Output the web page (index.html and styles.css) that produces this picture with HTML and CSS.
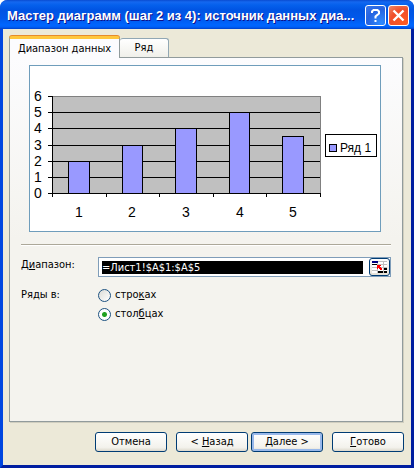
FILE: index.html
```html
<!DOCTYPE html>
<html lang="ru">
<head>
  <meta charset="UTF-8" />
  <meta name="viewport" content="width=device-width, initial-scale=1.0"/>
  <title>Мастер диаграмм</title>
  <link rel="stylesheet" href="styles.css">
</head>
<body>
  <form class="dialog">
    <header class="titlebar">
      <h1>Мастер диаграмм (шаг 2 из 4): источник данных диа...</h1>
      <button type="button" class="caption-btn" aria-label="Справка">
        <svg width="21" height="21" viewBox="0 0 21 21">
          <path d="M7 8V6.500L8.500 5H12.500L14 6.500V8.500L10.500 11.500V13.500M10.500 15V17" fill="none" stroke="#fff" stroke-width="2"/>
        </svg>
      </button>
      <button type="button" class="caption-btn close" aria-label="Закрыть">
        <svg width="21" height="21" viewBox="0 0 21 21">
          <path d="M5.500 5.500L15.500 15.500M15.500 5.500L5.500 15.500" fill="none" stroke="#fff" stroke-width="2.400"/>
        </svg>
      </button>
    </header>

    <main class="content">
      <div class="tabs" role="tablist">
        <button type="button" class="tab active" role="tab" aria-selected="true">Диапазон данных</button>
        <button type="button" class="tab" role="tab" aria-selected="false">Ряд</button>
      </div>

      <section class="panel">
        <svg class="chart" viewBox="0 0 352 167">
          <rect class="chart-frame" x="0.500" y="0.500" width="351" height="166"/>
          <rect class="plot" x="23.500" y="31.500" width="268" height="97"/>
          <path class="line" d="M23 47.500H291M23 63.500H291M23 80.500H291M23 96.500H291M23 112.500H291"/>
          <g class="bar">
            <rect x="39.500" y="96.500" width="21" height="32"/>
            <rect x="93.500" y="80.500" width="20" height="48"/>
            <rect x="146.500" y="63.500" width="21" height="65"/>
            <rect x="200.500" y="47.500" width="20" height="81"/>
            <rect x="253.500" y="71.500" width="21" height="57"/>
          </g>
          <path class="line" d="M23.500 31V132M19 128.500H292M19 31.500H23M19 47.500H23M19 63.500H23M19 80.500H23M19 96.500H23M19 112.500H23M77.500 129V132M130.500 129V132M184.500 129V132M237.500 129V132M291.500 129V132"/>
          <g class="axis" text-anchor="middle">
            <text x="9" y="36">6</text>
            <text x="9" y="52">5</text>
            <text x="9" y="68">4</text>
            <text x="9" y="85">3</text>
            <text x="9" y="101">2</text>
            <text x="9" y="117">1</text>
            <text x="9" y="133">0</text>
            <text x="50" y="152">1</text>
            <text x="103" y="152">2</text>
            <text x="157" y="152">3</text>
            <text x="211" y="152">4</text>
            <text x="264" y="152">5</text>
          </g>
          <rect class="legend" x="296.500" y="69.500" width="51" height="22"/>
          <rect class="bar" x="300.500" y="79.500" width="7" height="7"/>
          <text class="legend-text" x="311" y="87">Ряд 1</text>
        </svg>

        <hr class="divider">

        <div class="row">
          <label class="caption" for="range">Д<u>и</u>апазон:</label>
          <div class="range-box">
            <input id="range" class="range" type="text" value="=Лист1!$A$1:$A$5">
            <button type="button" class="picker" aria-label="Свернуть диалог">
              <svg width="15" height="12" viewBox="0 0 15 12" shape-rendering="crispEdges">
                <rect width="15" height="12" fill="#fff"/>
                <path d="M0 6.500H15M0 9.500H6M6 .5H15M6 3.500H15M5.500 0V12M11.500 0V12" stroke="#c0c0c0" fill="none"/>
                <rect width="6" height="2" fill="#000080"/>
                <path d="M0 3H5V4H0zM12 7H15V9H12zM6 10H11V12H6zM12 10H15V12H12z" fill="#000"/>
                <path d="M5 4H9V5H8V6H9V7H10V9H8V8H7V7H6V8H5z" fill="#f00"/>
              </svg>
            </button>
          </div>
        </div>

        <div class="row series">
          <span class="caption" id="series-label">Ряды в:</span>
          <div class="options" role="radiogroup" aria-labelledby="series-label">
            <label class="option"><input type="radio" name="series"><span>стро<u>к</u>ах</span></label>
            <label class="option"><input type="radio" name="series" checked><span>стол<u>б</u>цах</span></label>
          </div>
        </div>
      </section>
    </main>

    <footer class="actions">
      <button type="button" class="btn">Отмена</button>
      <div class="nav">
        <button type="button" class="btn">&lt; <u>Н</u>азад</button>
        <button type="button" class="btn default"><u>Д</u>алее &gt;</button>
      </div>
      <button type="button" class="btn"><u>Г</u>отово</button>
    </footer>
  </form>
</body>
</html>
```

FILE: styles.css
```css
:root {
  --face: #ece9d8;
  --field-border: #7f9db9;
  --btn-border: #003c74;
  --series: #9999ff;
}
* {
  box-sizing: border-box;
}
body {
  margin: 0;
  background: #fff;
  color: #000;
  font-family: "DejaVu Sans Condensed", Tahoma, sans-serif;
  font-size: 11px;
  line-height: 14px;
}
button, input {
  font: inherit;
  color: inherit;
  margin: 0;
}
u {
  text-underline-offset: 1px;
}
.dialog {
  display: flex;
  flex-direction: column;
  min-height: 100vh;
  background: var(--face);
  border: solid #0831d9;
  border-color: #0054e3 #001ea0 #001ea0 #0046e0;
  border-width: 0 3px 3px 3px;
  border-radius: 8px 8px 0 0;
}
.titlebar {
  display: flex;
  align-items: center;
  gap: 2px;
  height: 29px;
  margin: 0 -3px;
  padding: 2px 5px 0 7px;
  border-radius: 7px 7px 0 0;
  background: linear-gradient(#0a4bd0 0, #1468f0 2px, #0560ec 5px, #0054e3 10px, #0058ea 18px, #0066ff 25px, #0060f8 27px, #0040c8 29px);
}
.titlebar h1 {
  flex: 1;
  margin: 0;
  white-space: nowrap;
  color: #fff;
  font-family: "Trebuchet MS", "Liberation Sans", sans-serif;
  font-size: 13px;
  line-height: 18px;
  font-weight: 700;
  text-shadow: 1px 1px #0f1089;
}
.caption-btn {
  flex: none;
  width: 21px;
  height: 21px;
  padding: 0;
  border: 1px solid #fff;
  border-radius: 3px;
  background: radial-gradient(circle at 80% 90%, #2f8bff, #2663e0 60%, #3c78ea);
}
.caption-btn svg {
  display: block;
  margin: -1px;
}
.caption-btn.close {
  background: radial-gradient(circle at 80% 90%, #ff5a20, #f0502c 60%, #ec8a6c);
}
.content {
  flex: 1;
  display: flex;
  flex-direction: column;
  padding: 7px 8px 0 6px;
}
.tabs {
  display: flex;
  align-items: flex-end;
  height: 21px;
}
.tab {
  height: 19px;
  width: 49px;
  padding: 0;
  border: 1px solid #91a7b4;
  border-width: 1px 1px 0 0;
  border-radius: 3px 3px 0 0;
  background: linear-gradient(#fff, #f0f0ea);
}
.tab.active {
  position: relative;
  width: 111px;
  height: 22px;
  margin-bottom: -1px;
  border: 1px solid #919b9c;
  border-top: 3px solid #ffc73c;
  border-bottom: 0;
  background: #fcfcfe;
  box-shadow: inset 0 1px #fcfcfe, 0 -1px #e68b2c;
}
.panel {
  flex: 1;
  padding: 7px 11px;
  border: 1px solid #919b9c;
  background: linear-gradient(#fcfcfe, #f4f3ee 50%);
  box-shadow: 1px 1px #d0cebf;
}
.chart {
  display: block;
  width: calc(100% - 18px);
  margin: 0 10px 12px 8px;
  font-family: "Liberation Sans", Arial, sans-serif;
  font-size: 14px;
}
.chart-frame {
  fill: #fff;
  stroke: #6f9dbb;
}
.plot {
  fill: #c0c0c0;
  stroke: #808080;
}
.line {
  fill: none;
  stroke: #000;
}
.bar {
  fill: var(--series);
  stroke: #000;
}
.legend {
  fill: #fff;
  stroke: #000;
}
.legend-text {
  font-size: 12px;
}
.divider {
  height: 2px;
  margin: 0 0 11px;
  border: solid #aca899;
  border-width: 1px 0 0;
  border-bottom: 1px solid #fff;
}
.row {
  display: flex;
}
.caption {
  width: 77px;
  line-height: 16px;
}
.range-box {
  flex: 1;
  display: flex;
  justify-content: space-between;
  height: 20px;
  border: 1px solid var(--field-border);
  background: #fff;
}
.range {
  flex: 1;
  min-width: 0;
  height: 13px;
  margin: 3px 6px 0 3px;
  padding: 0;
  border: 0;
  background: #000;
  color: #fff;
  outline: none;
}
.picker {
  display: flex;
  align-items: center;
  justify-content: center;
  width: 21px;
  height: 18px;
  padding: 0;
  border: 1px solid var(--btn-border);
  border-radius: 3px;
  background: linear-gradient(#fff, #e4e0d6);
}
.series {
  margin-top: 10px;
}
.options {
  display: flex;
  flex-direction: column;
  gap: 3px;
}
.option {
  display: flex;
  align-items: center;
  gap: 4px;
  height: 16px;
}
.option input {
  appearance: none;
  width: 13px;
  height: 13px;
  border: 1px solid #1d5281;
  border-radius: 50%;
  background: linear-gradient(135deg, #dcdcd7, #fff);
}
.option input:checked {
  background: radial-gradient(circle, #21a121 2px, #fff 3px);
}
.actions {
  display: flex;
  justify-content: flex-end;
  gap: 9px;
  padding: 10px 7px 13px;
}
.nav {
  display: flex;
  gap: 3px;
}
.btn {
  width: 72px;
  height: 20px;
  padding: 0;
  border: 1px solid var(--btn-border);
  border-radius: 3px;
  background: linear-gradient(#fff, #f3f2ec 80%, #dcd8cc);
}
.btn.default {
  box-shadow: inset 0 0 0 2px #98b8ea;
}
```
